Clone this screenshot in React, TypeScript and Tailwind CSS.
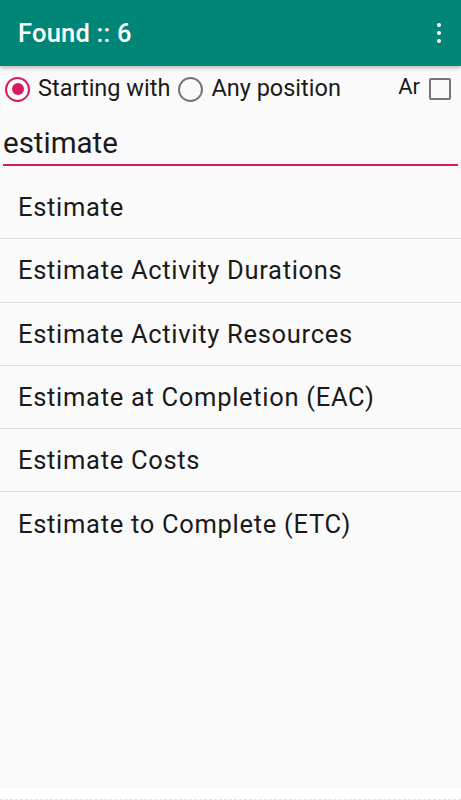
import { useState } from 'react';

const terms = [
  'Estimate',
  'Estimate Activity Durations',
  'Estimate Activity Resources',
  'Estimate at Completion (EAC)',
  'Estimate Costs',
  'Estimate to Complete (ETC)',
];

const Radio = ({ checked }: { checked: boolean }) => (
  <span
    className={`flex h-[25px] w-[25px] shrink-0 items-center justify-center rounded-full border-[2.5px] ${
      checked ? 'border-[#d81b60]' : 'border-[#757575]'
    }`}
  >
    {checked && <span className="h-[12px] w-[12px] rounded-full bg-[#d81b60]" />}
  </span>
);

export default function App() {
  const [mode, setMode] = useState<'start' | 'any'>('start');
  const [query, setQuery] = useState('estimate');

  return (
    <div className="flex h-[800px] w-full flex-col bg-[#fafafa] font-['Roboto',sans-serif] text-[#1a1a1a]">
      <header className="relative z-10 flex h-[66px] shrink-0 items-center justify-between bg-[#008577] pl-[18px] pr-[20px] shadow-[0_2px_4px_rgba(0,0,0,0.25)]">
        <h1 className="text-[25.5px] font-medium tracking-[0.2px] text-white">Found :: {terms.length}</h1>
        <button className="flex flex-col items-center gap-[3.5px]">
          <span className="h-[4.5px] w-[4.5px] rounded-full bg-white" />
          <span className="h-[4.5px] w-[4.5px] rounded-full bg-white" />
          <span className="h-[4.5px] w-[4.5px] rounded-full bg-white" />
        </button>
      </header>

      <div className="flex h-[45px] shrink-0 items-center pl-[5px] pr-[10px] pt-[1px]">
        <button className="flex items-center gap-[8px]" onClick={() => setMode('start')}>
          <Radio checked={mode === 'start'} />
          <span className="text-[23.5px] text-[#1a1a1a]">Starting with</span>
        </button>
        <button className="ml-[8px] flex items-center gap-[8px]" onClick={() => setMode('any')}>
          <Radio checked={mode === 'any'} />
          <span className="text-[23.5px] text-[#1a1a1a]">Any position</span>
        </button>
        <div className="ml-auto flex items-center gap-[9px]">
          <span className="-mt-[6px] text-[22px]">Ar</span>
          <span className="h-[22px] w-[22px] rounded-[2px] border-[2.5px] border-[#757575]" />
        </div>
      </div>

      <div className="mx-[3px] mt-[14px] shrink-0 border-b-2 border-[#d81b60] pb-[3px]">
        <input
          value={query}
          onChange={(e) => setQuery(e.target.value)}
          className="w-full bg-transparent text-[29.5px] leading-[36px] text-[#1a1a1a] outline-none"
        />
      </div>

      <ul className="mt-[10px] flex-1">
        {terms.map((t, i) => (
          <li
            key={t}
            className={`flex h-[63.3px] items-center px-[18px] text-[25.5px] tracking-[0.7px] ${
              i < terms.length - 1 ? 'border-b border-[#dcdcdc]' : ''
            }`}
          >
            {t}
          </li>
        ))}
      </ul>

      <div className="h-[12px] shrink-0 border-b border-dashed border-[#e4e4e4] bg-white" />
    </div>
  );
}
